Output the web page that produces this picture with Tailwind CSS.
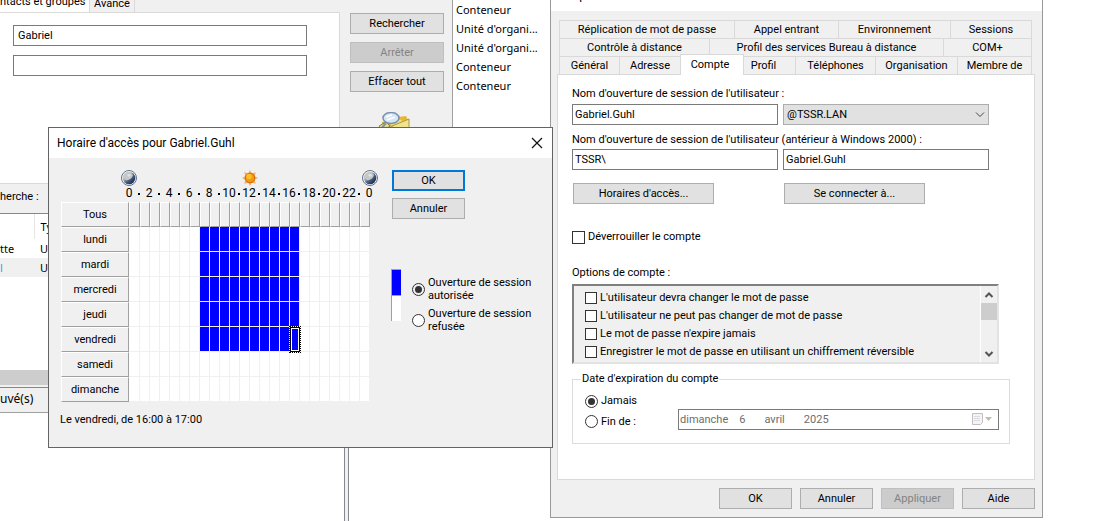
<!DOCTYPE html>
<html lang="fr">
<head>
<meta charset="utf-8">
<title>Horaire d'accès</title>
<script src="https://cdn.jsdelivr.net/npm/@tailwindcss/browser@4"></script>
</head>
<body class="bg-white">
<main class="relative h-screen overflow-hidden bg-white font-['Roboto',sans-serif] text-[11px] leading-4 text-black">

  <!-- Console window -->
  <section class="flex h-full" aria-label="Console">
    <div class="w-[344px]"></div>
    <div class="w-[5px] border-x border-[#828790] bg-[#f0f0f0]"></div>
    <ul class="pl-[107px] font-['Noto_Sans','Open_Sans',sans-serif] text-[11px] leading-[19px]">
      <li>Conteneur</li>
      <li>Unité d'organi...</li>
      <li>Unité d'organi...</li>
      <li>Conteneur</li>
      <li>Conteneur</li>
    </ul>
  </section>

  <!-- Search window -->
  <section class="absolute left-0 top-0 flex w-[453px] flex-col border-b border-r border-[#a0a0a0] bg-[#f0f0f0]" aria-label="Recherche">
    <div class="flex h-[183px]">
      <div class="flex w-[340px] flex-col">
        <div class="flex h-3 items-end">
          <button class="-mb-px h-[22px] w-[89px] bg-white text-left whitespace-nowrap">ntacts et groupes</button>
          <button class="h-4 w-[46px] border-x border-[#d9d9d9] text-center">Avancé</button>
        </div>
        <div class="flex grow flex-col gap-[9px] border-r border-t border-[#d9d9d9] bg-white pl-[13px] pr-8 pt-3">
          <input aria-label="Nom" value="Gabriel" class="h-[21px] w-full border border-[#7a7a7a] bg-white px-1">
          <input aria-label="Description" class="h-[21px] w-full border border-[#7a7a7a] bg-white px-1">
        </div>
      </div>
      <div class="flex grow flex-col gap-2 pl-[10px] pr-2 pt-[13px]">
        <button class="h-[21px] border border-[#adadad] bg-[#e1e1e1]">Rechercher</button>
        <button disabled class="h-[21px] border border-[#bfbfbf] bg-[#cccccc] text-[#838383]">Arrêter</button>
        <button class="h-[21px] border border-[#adadad] bg-[#e1e1e1]">Effacer tout</button>
        <svg class="ml-7 mt-3 h-8 w-8" viewBox="0 0 32 32" aria-hidden="true">
          <path d="M4 10 20 5l9 3 2 16-19 6-9-6z" fill="#c9b052"/>
          <path d="m9 9 17-2 4 5-14 4z" fill="#f3df7a"/>
          <path d="m20 5 8-1 2 4-6 1z" fill="#e8b733"/>
          <path d="m14 14 17-7v9l-15 9z" fill="#efe48e" stroke="#a99746"/>
          <path d="m1 14 7-4 4 4-7 5z" fill="#e7dc8c" stroke="#8e824b"/>
          <ellipse cx="13" cy="6" rx="8" ry="5.500" fill="#d5e7f5" stroke="#7892ad" stroke-width="1.500"/>
          <path d="m8 5 6-2M9 8l8-3" stroke="#fff" stroke-width="1.500"/>
          <path d="m8 11-5 6" stroke="#87939e" stroke-width="2"/>
        </svg>
      </div>
    </div>
    <div class="h-[31px] border-b border-t border-b-[#828790] border-t-[#d9d9d9] pt-[5px]">herche :</div>
    <table class="w-full table-fixed bg-white text-left font-['Noto_Sans','Open_Sans',sans-serif] text-[11px] leading-[19px]">
      <colgroup><col class="w-[34px]"><col class="w-[14px]"><col></colgroup>
      <thead><tr class="h-[25px]"><th class="border-r border-[#e5e5e5]"></th><th class="overflow-hidden pl-[6px] font-normal">Ty</th><th></th></tr></thead>
      <tbody>
        <tr><td>tte</td><td class="overflow-hidden pl-[6px]">U</td><td></td></tr>
        <tr class="bg-[#f0f0f0]"><td class="text-[#3aa0e8]">l</td><td class="overflow-hidden pl-[6px]">U</td><td></td></tr>
      </tbody>
    </table>
    <div class="h-[93px] bg-white"></div>
    <div class="h-[15px] bg-[#cdcdcd]"></div>
    <div class="h-[3px] border-b border-[#828790] bg-[#f0f0f0]"></div>
    <div class="pb-1 pt-[2px] font-['Noto_Sans','Open_Sans',sans-serif] text-[12px] leading-[18px]">uvé(s)</div>
  </section>

  <!-- Account properties dialog -->
  <section class="absolute left-[550px] top-0 w-[493px] border-x border-b border-[#999999] bg-[#f0f0f0]" role="dialog" aria-label="Propriétés">
    <h2 class="flex h-[11px] items-end overflow-hidden bg-white pb-2 pl-[10px] text-[12px]">Propriétés</h2>
    <div class="pl-[6px] pr-[7px] pt-[9px]">
      <div class="pl-[2px] pr-[3px]" role="tablist">
        <div class="flex h-[18px] border-l border-t border-[#d9d9d9]">
          <button class="w-[175px] border-r border-[#d9d9d9]">Réplication de mot de passe</button>
          <button class="w-[104px] border-r border-[#d9d9d9]">Appel entrant</button>
          <button class="w-[112px] border-r border-[#d9d9d9]">Environnement</button>
          <button class="grow border-r border-[#d9d9d9]">Sessions</button>
        </div>
        <div class="flex h-[18px] border-l border-t border-[#d9d9d9]">
          <button class="w-[150px] border-r border-[#d9d9d9]">Contrôle à distance</button>
          <button class="w-[234px] border-r border-[#d9d9d9]">Profil des services Bureau à distance</button>
          <button class="grow border-r border-[#d9d9d9]">COM+</button>
        </div>
        <div class="flex h-[18px] border-l border-t border-[#d9d9d9]">
          <button class="w-[60px] border-r border-[#d9d9d9]">Général</button>
          <button class="w-[60px]">Adresse</button>
          <button class="z-10 -mb-px -mt-[3px] w-[64px] border-x border-t border-[#d9d9d9] bg-white pr-1">Compte</button>
          <button class="w-[52px] border-r border-[#d9d9d9] pr-3">Profil</button>
          <button class="w-[80px] border-r border-[#d9d9d9]">Téléphones</button>
          <button class="w-[82px] border-r border-[#d9d9d9]">Organisation</button>
          <button class="grow border-r border-[#d9d9d9]">Membre de</button>
        </div>
      </div>
      <form class="border border-[#d9d9d9] bg-white pb-[35px] pl-[14px] pr-6 pt-[11px]">
        <label for="upn" class="block">Nom d'ouverture de session de l'utilisateur :</label>
        <div class="mt-[2px] grid grid-cols-2 gap-[5px] pr-[21px]">
          <input id="upn" value="Gabriel.Guhl" class="h-[21px] min-w-0 border border-[#7a7a7a] bg-white px-[2px]">
          <div class="relative min-w-0">
            <select aria-label="Domaine" class="block h-[21px] w-full appearance-none border border-[#adadad] bg-[#e1e1e1] px-[3px]"><option>@TSSR.LAN</option></select>
            <svg class="pointer-events-none absolute right-1 top-2 h-[6px] w-[10px]" viewBox="0 0 10 6" fill="none" stroke="#444" aria-hidden="true"><path d="m1 .5 4 4 4-4"/></svg>
          </div>
        </div>
        <label for="sam" class="mt-[7px] block">Nom d'ouverture de session de l'utilisateur (antérieur à Windows 2000) :</label>
        <div class="mt-px grid grid-cols-2 gap-[5px] pr-[21px]">
          <input aria-label="Domaine NetBIOS" value="TSSR\" class="h-[21px] min-w-0 border border-[#7a7a7a] bg-white px-[2px]">
          <input id="sam" value="Gabriel.Guhl" class="h-[21px] min-w-0 border border-[#7a7a7a] bg-white px-[2px]">
        </div>
        <div class="mt-[13px] flex gap-[70px] pl-px">
          <button type="button" class="h-[21px] w-[141px] border border-[#adadad] bg-[#e1e1e1]">Horaires d'accès...</button>
          <button type="button" class="h-[21px] w-[141px] border border-[#adadad] bg-[#e1e1e1]">Se connecter à...</button>
        </div>
        <label class="mt-[25px] flex items-center gap-[3px]"><input type="checkbox" class="size-[13px] appearance-none border border-[#333] bg-white">Déverrouiller le compte</label>
        <div id="opt" class="mt-5">Options de compte :</div>
        <div role="group" aria-labelledby="opt" class="mr-[11px] mt-[3px] flex h-20 border-2 border-b-[#e3e3e3] border-l-[#808080] border-r-[#e3e3e3] border-t-[#808080] bg-[#f0f0f0]">
          <div class="grow pl-[11px] pt-[3px] leading-[18px]">
            <label class="flex items-center gap-[3px]"><input type="checkbox" class="size-3 appearance-none border border-[#333] bg-white">L'utilisateur devra changer le mot de passe</label>
            <label class="flex items-center gap-[3px]"><input type="checkbox" class="size-3 appearance-none border border-[#333] bg-white">L'utilisateur ne peut pas changer de mot de passe</label>
            <label class="flex items-center gap-[3px]"><input type="checkbox" class="size-3 appearance-none border border-[#333] bg-white">Le mot de passe n'expire jamais</label>
            <label class="flex items-center gap-[3px]"><input type="checkbox" class="size-3 appearance-none border border-[#333] bg-white">Enregistrer le mot de passe en utilisant un chiffrement réversible</label>
          </div>
          <div class="flex w-[17px] flex-col border-l border-white">
            <svg class="h-[17px] w-4" viewBox="0 0 16 17" fill="none" stroke="#555" stroke-width="2" aria-hidden="true"><path d="m4.500 11 3.500-3.500 3.500 3.500"/></svg>
            <div class="h-[17px] bg-[#cdcdcd]"></div>
            <svg class="mt-auto h-[17px] w-4" viewBox="0 0 16 17" fill="none" stroke="#555" stroke-width="2" aria-hidden="true"><path d="m4.500 7 3.500 3.500 3.500-3.500"/></svg>
          </div>
        </div>
        <fieldset class="mt-[7px] border border-[#dcdcdc] pb-[13px] pl-3 pr-[10px]">
          <legend class="-ml-1 px-[1px]">Date d'expiration du compte</legend>
          <label class="mt-[6px] flex items-center gap-[3px]"><input type="radio" name="exp" checked class="size-[13px] appearance-none rounded-full border border-[#333] bg-white p-[2px] checked:bg-[#333] checked:bg-clip-content">Jamais</label>
          <div class="flex items-center">
            <label class="flex grow items-center gap-[3px] pt-1"><input type="radio" name="exp" class="size-[13px] appearance-none rounded-full border border-[#333] bg-white">Fin de :</label>
            <div class="relative w-[321px]">
              <input aria-label="Date d'expiration" disabled value="dimanche&nbsp;&nbsp;&nbsp;&nbsp;6&nbsp;&nbsp;&nbsp;&nbsp;&nbsp;&nbsp;&nbsp;avril&nbsp;&nbsp;&nbsp;&nbsp;&nbsp;&nbsp;&nbsp;2025" class="block h-[21px] w-full border border-[#7a7a7a] bg-white px-px text-[#6d6d6d]">
              <svg class="absolute right-[6px] top-1 h-[13px] w-[21px]" viewBox="0 0 21 13" aria-hidden="true">
                <path d="M.5.5h10v9l-2 2h-8z" fill="#f5f3f5" stroke="#c5bdc2"/>
                <path d="M2.500 3.500h6M2.500 5.500h6M2.500 7.500h6" stroke="#bcc6cc" stroke-dasharray="1 1"/>
                <path d="m13 4 3.500 4L20 4z" fill="#bdbdb5"/>
              </svg>
            </div>
          </div>
        </fieldset>
      </form>
      <div class="flex justify-end gap-2 pb-2 pt-2">
        <button class="h-[21px] w-[73px] border border-[#adadad] bg-[#e1e1e1]">OK</button>
        <button class="h-[21px] w-[73px] border border-[#adadad] bg-[#e1e1e1]">Annuler</button>
        <button disabled class="h-[21px] w-[73px] border border-[#bfbfbf] bg-[#cccccc] text-[#838383]">Appliquer</button>
        <button class="h-[21px] w-[73px] border border-[#adadad] bg-[#e1e1e1]">Aide</button>
      </div>
    </div>
  </section>

  <!-- Logon hours dialog -->
  <section class="absolute left-12 top-[127px] z-20 w-[505px] border border-[#646464] bg-[#f0f0f0] pb-[19px]" role="dialog" aria-labelledby="hours-title">
    <header class="flex h-[30px] items-center justify-between bg-white pl-2 pr-[9px]">
      <h1 id="hours-title" class="text-[12px]">Horaire d'accès pour Gabriel.Guhl</h1>
      <button aria-label="Fermer"><svg class="size-3" viewBox="0 0 12 12" fill="none" stroke="#111" stroke-width="1.200"><path d="m1 1 10 10M11 1 1 11"/></svg></button>
    </header>
    <div class="flex items-start pl-3 pt-3">
      <div class="w-[317px]">
        <div class="flex justify-between pl-[60px]">
          <svg class="size-4" viewBox="0 0 16 16" aria-hidden="true"><defs><linearGradient id="moon" x1="0" y1="0" x2="1" y2="1"><stop offset=".3" stop-color="#c4c7c9"/><stop offset=".55" stop-color="#536480"/><stop offset=".85" stop-color="#182e59"/></linearGradient></defs><circle cx="8" cy="8" r="7.500" fill="#f8f9fb" stroke="#63718b"/><circle cx="8" cy="8" r="6.300" fill="url(#moon)"/><path d="M3 7q1-5 6-5l3 3q-1 4-5 5-3 1-4-3" fill="#c5c8c8"/><path d="M6 5q2-2 4 0l-2 2z" fill="#e2e4e1"/></svg>
          <svg class="size-4" viewBox="0 0 16 16" aria-hidden="true"><path d="m8 0 1.700 3.200L13.700 2.300 12.800 6.300 16 8l-3.200 1.700.9 4-4-.9L8 16l-1.700-3.200-4 .9.9-4L0 8l3.200-1.700-.9-4 4 .9z" fill="#f0ae72"/><circle cx="8" cy="8" r="4.800" fill="#f69a08" stroke="#ca6708"/><circle cx="7" cy="6.500" r="2.700" fill="#ffc02f"/></svg>
          <svg class="size-4" viewBox="0 0 16 16" aria-hidden="true"><circle cx="8" cy="8" r="7.500" fill="#f8f9fb" stroke="#63718b"/><circle cx="8" cy="8" r="6.300" fill="url(#moon)"/><path d="M3 7q1-5 6-5l3 3q-1 4-5 5-3 1-4-3" fill="#c5c8c8"/><path d="M6 5q2-2 4 0l-2 2z" fill="#e2e4e1"/></svg>
        </div>
        <div id="scale" class="flex pl-[63px] text-[12px] leading-[15px]"></div>
        <table class="mt-px w-[309px] table-fixed border-separate border-spacing-0">
          <colgroup><col class="w-[68px]"><col class="w-[11px]"><col span="23" class="w-[10px]"></colgroup>
          <tbody id="hours"></tbody>
        </table>
        <p class="mt-[10px] -ml-px">Le vendredi, de 16:00 à 17:00</p>
      </div>
      <div class="flex flex-col pl-[14px]">
        <button class="h-[21px] w-[73px] border-2 border-[#0078d7] bg-[#e1e1e1]">OK</button>
        <button class="mt-[7px] h-[21px] w-[73px] border border-[#adadad] bg-[#e1e1e1]">Annuler</button>
        <div class="-ml-px mt-[50px] flex gap-[11px]">
          <div class="flex flex-col">
            <div class="h-[26px] w-[10px] border-l border-t border-[#a0a0a0] bg-[#0000ff]"></div>
            <div class="h-[26px] w-[10px] border-l border-t border-[#a0a0a0] bg-white"></div>
          </div>
          <div class="flex w-[126px] flex-col gap-[5px] pt-[7px] leading-[13px]">
            <label class="flex items-center gap-[3px]"><input type="radio" name="logon" checked class="size-[13px] shrink-0 appearance-none rounded-full border border-[#333] bg-white p-[2px] checked:bg-[#333] checked:bg-clip-content"><span>Ouverture de session<br>autorisée</span></label>
            <label class="flex items-center gap-[3px]"><input type="radio" name="logon" class="size-[13px] shrink-0 appearance-none rounded-full border border-[#333] bg-white"><span>Ouverture de session<br>refusée</span></label>
          </div>
        </div>
      </div>
    </div>
  </section>
</main>
<script>
  // Hour scale: even hours as numbers, odd hours as dots.
  const scale = document.getElementById('scale');
  for (let h = 0; h <= 24; h++) {
    scale.insertAdjacentHTML('beforeend', h % 2
      ? '<span class="flex w-[10px] shrink-0 items-center justify-center"><i class="size-[2px] bg-black"></i></span>'
      : '<span class="flex w-[10px] shrink-0 justify-center">' + (h % 24) + '</span>');
  }
  // Weekly schedule: logon allowed from 7:00 to 17:00, Monday to Friday.
  const days = ['Tous', 'lundi', 'mardi', 'mercredi', 'jeudi', 'vendredi', 'samedi', 'dimanche'];
  const header = 'h-[25px] border-b border-r border-l border-t border-b-[#a0a0a0] border-r-[#a0a0a0] border-l-white border-t-white bg-[#f0f0f0] p-0 font-normal';
  const free = 'h-[25px] border-b border-r border-[#f0f0f0] bg-white p-0';
  const open = 'h-[25px] border-b border-r border-[#f0f0f0] bg-[#0000ff] p-0';
  const focus = 'h-[25px] bg-[#0000ff] p-0 outline-1 outline-dotted outline-black shadow-[inset_0_0_0_1px_black,inset_0_0_0_2px_white]';
  document.getElementById('hours').innerHTML = days.map((d, r) => {
    let row = '<tr><th scope="row" class="' + header + '">' + d + '</th>';
    for (let h = 0; h < 24; h++) {
      const c = r === 0 ? header : r === 5 && h === 16 ? focus : r < 6 && h > 6 && h < 17 ? open : free;
      row += '<td class="' + c + '"></td>';
    }
    return row + '</tr>';
  }).join('');
</script>
</body>
</html>
